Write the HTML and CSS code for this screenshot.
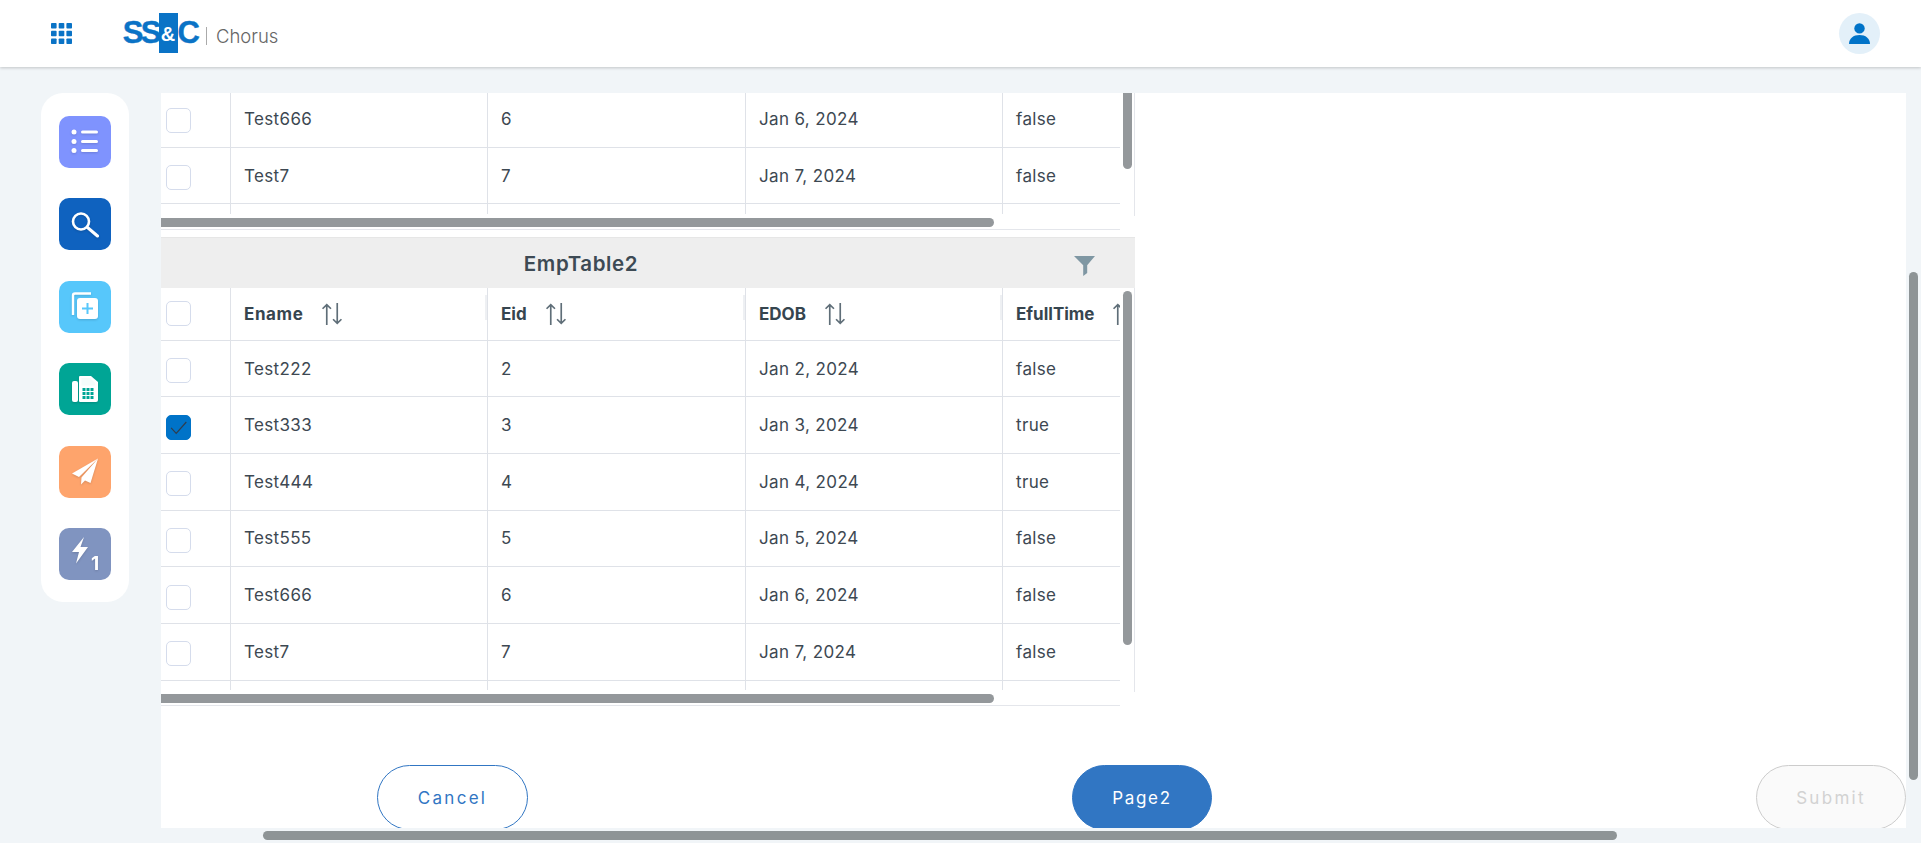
FILE: index.html
```html
<!DOCTYPE html>
<html lang="en">
<head>
  <meta charset="UTF-8">
  <title>Chorus</title>
  <link rel="stylesheet" href="styles.css">
</head>
<body>

  <header class="topbar">
    <div class="brand">
      <svg class="apps" viewBox="0 0 21 21" fill="#0a73c6">
        <rect x="0" y="0" width="5.6" height="5.6" rx=".8"/><rect x="7.7" y="0" width="5.6" height="5.6" rx=".8"/><rect x="15.4" y="0" width="5.6" height="5.6" rx=".8"/>
        <rect x="0" y="7.7" width="5.6" height="5.6" rx=".8"/><rect x="7.7" y="7.7" width="5.6" height="5.6" rx=".8"/><rect x="15.4" y="7.7" width="5.6" height="5.6" rx=".8"/>
        <rect x="0" y="15.4" width="5.6" height="5.6" rx=".8"/><rect x="7.7" y="15.4" width="5.6" height="5.6" rx=".8"/><rect x="15.4" y="15.4" width="5.6" height="5.6" rx=".8"/>
      </svg>
      <div class="logo"><span>SS</span><span class="logo-amp">&amp;</span><span>C</span></div>
      <div class="product">Chorus</div>
    </div>
    <div class="avatar">
      <svg viewBox="0 0 21 21" fill="#0073c8">
        <circle cx="10.5" cy="5.4" r="5.2"/>
        <path d="M0 21c0-5.6 4.4-9 10.5-9S21 15.400 21 21z"/>
      </svg>
    </div>
  </header>

  <div class="page">
    <nav class="sidebar">
      <div class="side-btn list">
        <svg viewBox="0 0 52 52" fill="#fff">
          <circle cx="15" cy="16" r="2.500"/><circle cx="15" cy="25.500" r="2.500"/><circle cx="15" cy="34.500" r="2.500"/>
          <rect x="22" y="14.500" width="17" height="3" rx="1.500"/><rect x="22" y="24" width="17" height="3" rx="1.500"/><rect x="22" y="33" width="17" height="3" rx="1.500"/>
        </svg>
      </div>
      <div class="side-btn search">
        <svg viewBox="0 0 52 52" fill="none" stroke="#fff" stroke-width="2.600" stroke-linecap="round">
          <circle cx="22" cy="23.500" r="8"/>
          <path d="M28.500 29.500L38.500 38" stroke-width="3"/>
        </svg>
      </div>
      <div class="side-btn copy">
        <svg viewBox="0 0 52 52">
          <path d="M14 34V14.500a2 2 0 0 1 2-2h16" fill="none" stroke="#fff" stroke-width="2.400"/>
          <rect x="18" y="17" width="21" height="21" rx="3" fill="#fff"/>
          <path d="M28.500 22v11M23 27.500h11" stroke="#57c7fb" stroke-width="2"/>
        </svg>
      </div>
      <div class="side-btn fax">
        <svg viewBox="0 0 52 52" fill="#fff">
          <rect x="13" y="18" width="6" height="21" rx="2"/>
          <path d="M21 39a1 1 0 0 1-1-1V14a1 1 0 0 1 1-1h11l7 6v18a2 2 0 0 1-2 2z"/>
          <path d="M22.500 15h8.500l5 5v2.500H22.500z" fill="#d8f3f0" opacity=".25"/>
          <g fill="#00a595">
            <rect x="23.500" y="25" width="3" height="3"/><rect x="27.500" y="25" width="3" height="3"/><rect x="31.500" y="25" width="3" height="3"/>
            <rect x="23.500" y="29" width="3" height="3"/><rect x="27.500" y="29" width="3" height="3"/><rect x="31.500" y="29" width="3" height="3"/>
            <rect x="23.500" y="33" width="3" height="3"/><rect x="27.500" y="33" width="3" height="3"/><rect x="31.500" y="33" width="3" height="3"/>
          </g>
        </svg>
      </div>
      <div class="side-btn send">
        <svg viewBox="0 0 52 52" fill="#fff">
          <path d="M39 12.500L13 27.500l7 3.500z"/>
          <path d="M39 12.500L22.500 31.500l-.5 7 4-4 5.500 2.500z"/>
        </svg>
      </div>
      <div class="side-btn bolt">
        <svg viewBox="0 0 52 52" fill="#fff">
          <path d="M25 9L13 24h7l-3 11.500L29 19h-7.500z"/>
          <text x="32" y="42" class="bolt-num">1</text>
        </svg>
      </div>
    </nav>

    <main class="panel">
      <section class="grid-block first">
        <div class="grid-view">
          <div class="grid-row">
            <div class="cell check"><span class="box"></span></div>
            <div class="cell">Test666</div><div class="cell">6</div><div class="cell">Jan 6, 2024</div><div class="cell">false</div>
          </div>
          <div class="grid-row">
            <div class="cell check"><span class="box"></span></div>
            <div class="cell">Test7</div><div class="cell">7</div><div class="cell">Jan 7, 2024</div><div class="cell">false</div>
          </div>
          <div class="grid-row tail"><div class="cell"></div><div class="cell"></div><div class="cell"></div><div class="cell"></div><div class="cell"></div></div>
        </div>
        <div class="grid-foot"></div>
        <div class="vbar"></div>
        <div class="hbar"></div>
      </section>

      <div class="grid-title">
        <div class="grid-name">EmpTable2</div>
        <div class="grid-filter">
          <svg viewBox="0 0 21 20" fill="#7f97a3"><path d="M0 0h21l-7.800 9.200V17l-4 3V9.200z"/></svg>
        </div>
      </div>

      <section class="grid-block second">
        <div class="grid-view">
          <div class="grid-row head">
            <div class="cell check"><span class="box"></span></div>
            <div class="cell"><span class="ename">Ename</span>
              <svg class="sort" viewBox="0 0 21 21" fill="none" stroke="#5f6e78" stroke-width="1.600"><path d="M5.500 21V1.500M1.500 5.500l4-4 4 4M15.500 0v19.500M11.500 15.500l4 4 4-4"/></svg>
            </div>
            <div class="cell"><span>Eid</span>
              <svg class="sort" viewBox="0 0 21 21" fill="none" stroke="#5f6e78" stroke-width="1.600"><path d="M5.500 21V1.500M1.500 5.500l4-4 4 4M15.500 0v19.500M11.500 15.500l4 4 4-4"/></svg>
            </div>
            <div class="cell"><span>EDOB</span>
              <svg class="sort" viewBox="0 0 21 21" fill="none" stroke="#5f6e78" stroke-width="1.600"><path d="M5.500 21V1.500M1.500 5.500l4-4 4 4M15.500 0v19.500M11.500 15.500l4 4 4-4"/></svg>
            </div>
            <div class="cell"><span>EfullTime</span>
              <svg class="sort" viewBox="0 0 21 21" fill="none" stroke="#5f6e78" stroke-width="1.600"><path d="M5.500 21V1.500M1.500 5.500l4-4 4 4M15.500 0v19.500M11.500 15.500l4 4 4-4"/></svg>
            </div>
          </div>
          <div class="grid-row">
            <div class="cell check"><span class="box"></span></div>
            <div class="cell">Test222</div><div class="cell">2</div><div class="cell">Jan 2, 2024</div><div class="cell">false</div>
          </div>
          <div class="grid-row">
            <div class="cell check"><span class="box checked">
              <svg viewBox="0 0 25 25" fill="none" stroke="#2f3e4e" stroke-width="1.300"><path d="M4.500 13l5.500 6L21 6.500"/></svg>
            </span></div>
            <div class="cell">Test333</div><div class="cell">3</div><div class="cell">Jan 3, 2024</div><div class="cell">true</div>
          </div>
          <div class="grid-row">
            <div class="cell check"><span class="box"></span></div>
            <div class="cell">Test444</div><div class="cell">4</div><div class="cell">Jan 4, 2024</div><div class="cell">true</div>
          </div>
          <div class="grid-row">
            <div class="cell check"><span class="box"></span></div>
            <div class="cell">Test555</div><div class="cell">5</div><div class="cell">Jan 5, 2024</div><div class="cell">false</div>
          </div>
          <div class="grid-row">
            <div class="cell check"><span class="box"></span></div>
            <div class="cell">Test666</div><div class="cell">6</div><div class="cell">Jan 6, 2024</div><div class="cell">false</div>
          </div>
          <div class="grid-row">
            <div class="cell check"><span class="box"></span></div>
            <div class="cell">Test7</div><div class="cell">7</div><div class="cell">Jan 7, 2024</div><div class="cell">false</div>
          </div>
          <div class="grid-row tail"><div class="cell"></div><div class="cell"></div><div class="cell"></div><div class="cell"></div><div class="cell"></div></div>
        </div>
        <div class="grid-foot"></div>
        <div class="vbar"></div>
        <div class="hbar"></div>
      </section>

      <div class="actions">
        <button class="btn btn-cancel">Cancel</button>
        <button class="btn btn-page">Page2</button>
        <button class="btn btn-submit">Submit</button>
      </div>
    </main>
  </div>

  <div class="page-hbar"></div>
  <div class="page-vbar"></div>

</body>
</html>
```

FILE: styles.css
```css
* {
  box-sizing: border-box;
}
html, body {
  height: 100%;
}
body {
  margin: 0;
  background: #f1f5f8;
  font-family: Inter, 'Noto Sans', sans-serif;
  color: #3d4852;
  overflow: hidden;
  position: relative;
}

/* top bar */
.topbar {
  height: 67px;
  background: #fff;
  box-shadow: 0 1px 3px rgba(0, 0, 0, 0.2);
  display: flex;
  align-items: center;
  justify-content: space-between;
  padding: 0 41px 0 51px;
  position: relative;
  z-index: 2;
}
.brand {
  display: flex;
  align-items: center;
}
.apps {
  width: 21px;
  height: 21px;
  margin-top: -1px;
}
.logo {
  margin-left: 51px;
  width: 74px;
  height: 40px;
  display: flex;
  align-items: center;
  justify-content: center;
  font-family: 'Liberation Sans', sans-serif;
  font-weight: 700;
  font-size: 31px;
  letter-spacing: -2.800px;
  -webkit-text-stroke: 0.4px #0a73c6;
  color: #0a73c6;
  margin-top: -1px;
}
.logo-amp {
  background: #0a73c6;
  color: #fff;
  -webkit-text-stroke: 0;
  width: 19px;
  height: 40px;
  line-height: 42px;
  font-size: 20px;
  letter-spacing: 0;
  text-align: center;
  flex: none;
}
.product {
  margin-left: 9px;
  padding-left: 9px;
  border-left: 1px solid #aaa;
  font-size: 18.500px;
  font-weight: 300;
  line-height: 18px;
  color: #666;
  margin-top: 5px;
}
.avatar {
  width: 41px;
  height: 41px;
  border-radius: 50%;
  background: #e3f0f9;
  display: flex;
  align-items: center;
  justify-content: center;
  margin-top: -1px;
}
.avatar svg {
  width: 21px;
  height: 21px;
}

/* layout */
.page {
  display: flex;
  align-items: flex-start;
  gap: 32px;
  padding: 26px 0 0 41px;
}
.sidebar {
  width: 88px;
  height: 509px;
  background: #fff;
  border-radius: 22px;
  padding-top: 23px;
  display: flex;
  flex-direction: column;
  align-items: center;
  gap: 30.400px;
}
.side-btn {
  width: 52px;
  height: 52px;
  border-radius: 10px;
}
.side-btn svg {
  display: block;
  width: 52px;
  height: 52px;
  filter: drop-shadow(0 1px 1px rgba(0, 0, 0, 0.15));
}
.list { background: #7f93fe; }
.search { background: #0f62bf; }
.copy { background: #57c7fb; }
.fax { background: #00a595; }
.send { background: #fea46c; }
.bolt { background: #8094c0; }
.bolt-num {
  font-family: Inter, sans-serif;
  font-size: 19px;
  font-weight: 700;
}

.panel {
  width: 1745px;
  height: 735px;
  background: #fff;
  overflow: hidden;
}

/* grids */
.grid-block {
  width: 974px;
  position: relative;
}
.first .grid-view {
  height: 121px;
}
.second .grid-view {
  height: 402px;
}
.grid-view {
  width: 959px;
  overflow: hidden;
  display: flex;
  flex-direction: column;
  justify-content: flex-end;
  position: relative;
}
.grid-block::after {
  content: "";
  position: absolute;
  top: 0;
  right: 0;
  width: 1px;
  height: calc(100% - 14px);
  background: #e4e6eb;
}
.grid-foot {
  height: 16px;
  border-bottom: 1px solid #e4e6eb;
  width: 959px;
}
.grid-row {
  display: grid;
  grid-template-columns: 70px 257px 258px 257px 117px;
  height: 56.670px;
  flex: none;
  border-bottom: 1px solid #dfe2e8;
  font-size: 17px;
  letter-spacing: 0.350px;
}
.grid-row.tail {
  height: 9.400px;
  border-bottom: 0;
}
.first .grid-row.tail {
  height: 9.600px;
}
.grid-row.head {
  height: 52.600px;
  font-weight: 700;
  color: #36454f;
  letter-spacing: 0;
}
.cell {
  display: flex;
  align-items: center;
  white-space: nowrap;
  overflow: hidden;
  padding-left: 13px;
  border-right: 1px solid #dfe2e8;
  position: relative;
}
.cell:last-child {
  border-right: 0;
}
.head .cell:not(.check):not(:last-child)::after {
  content: "";
  position: absolute;
  right: 0;
  top: 7px;
  width: 2px;
  height: 25px;
  background: #eef0f3;
}
.cell.check {
  padding-left: 5px;
  padding-top: 4px;
}
.head .cell.check {
  padding-top: 0;
}
.box {
  width: 25px;
  height: 25px;
  border: 1px solid #d5dcec;
  border-radius: 5px;
  background: #fff;
  flex: none;
}
.box.checked {
  background: #0073c8;
  border-color: #0073c8;
}
.box.checked svg {
  display: block;
  width: 23px;
  height: 23px;
}
.sort {
  width: 22px;
  height: 22px;
  margin-left: 18px;
  flex: none;
}
.ename {
  letter-spacing: 0.600px;
}
.vbar {
  position: absolute;
  right: 3px;
  width: 9px;
  background: #94989b;
  border-radius: 5px;
}
.first .vbar {
  top: -10px;
  height: 86px;
}
.second .vbar {
  top: 3px;
  height: 354px;
}
.hbar {
  position: absolute;
  left: 0;
  bottom: 3px;
  width: 833px;
  height: 9px;
  background: #94989b;
  border-radius: 0 5px 5px 0;
}
.first {
  margin-bottom: 7px;
}

.grid-title {
  width: 974px;
  height: 51px;
  background: #eee;
  border-top: 1px solid #e6e6e6;
  display: flex;
  align-items: center;
}
.grid-name {
  flex: 1;
  text-align: center;
  font-size: 20.500px;
  font-weight: 600;
  letter-spacing: 0.600px;
  color: #3d4a54;
}
.grid-filter {
  width: 134px;
  padding: 5px 0 0 73px;
}
.grid-filter svg {
  display: block;
  width: 21px;
  height: 20px;
}

/* buttons */
.actions {
  display: flex;
  justify-content: space-between;
  margin-top: 59px;
  padding-left: 216px;
}
.btn {
  height: 65px;
  border-radius: 33px;
  font-family: Inter, sans-serif;
  font-size: 17px;
  letter-spacing: 2.300px;
  cursor: pointer;
}
.btn-cancel {
  width: 151px;
  background: #fff;
  border: 1px solid #3176c3;
  color: #3176c3;
}
.btn-page {
  width: 140px;
  background: #3176c3;
  border: 1px solid #3176c3;
  color: #fff;
  letter-spacing: 1.700px;
}
.btn-submit {
  width: 150px;
  background: #fafafa;
  border: 1px solid #ccc;
  color: #d2d2d2;
}

/* page scrollbars */
.page-hbar {
  position: absolute;
  left: 263px;
  top: 831px;
  width: 1354px;
  height: 9px;
  background: #8e9496;
  border-radius: 5px;
}
.page-vbar {
  position: absolute;
  left: 1909px;
  top: 272px;
  width: 9px;
  height: 508px;
  background: #8e9496;
  border-radius: 5px;
}
```
